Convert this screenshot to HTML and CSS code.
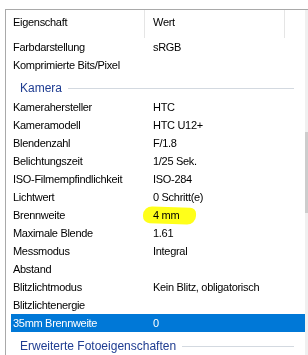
FILE: index.html
```html
<!DOCTYPE html>
<html>
<head>
<meta charset="utf-8">
<link rel="stylesheet" href="styles.css">
</head>
<body>
<div class="frame">
  <div class="list">
    <div class="header">
      <div class="hcell hname">Eigenschaft</div>
      <div class="hcell hval">Wert</div>
    </div>
    <div class="rows">
      <div class="row"><span class="name">Farbdarstellung</span><span class="val">sRGB</span></div>
      <div class="row"><span class="name">Komprimierte Bits/Pixel</span><span class="val"></span></div>
      <div class="group"><span class="gtext">Kamera</span></div>
      <div class="row"><span class="name">Kamerahersteller</span><span class="val">HTC</span></div>
      <div class="row"><span class="name">Kameramodell</span><span class="val">HTC U12+</span></div>
      <div class="row"><span class="name">Blendenzahl</span><span class="val">F/1.8</span></div>
      <div class="row"><span class="name">Belichtungszeit</span><span class="val">1/25 Sek.</span></div>
      <div class="row"><span class="name">ISO-Filmempfindlichkeit</span><span class="val">ISO-284</span></div>
      <div class="row"><span class="name">Lichtwert</span><span class="val">0 Schritt(e)</span></div>
      <div class="row"><span class="name">Brennweite</span><span class="val marked">4 mm<span class="hl"></span></span></div>
      <div class="row"><span class="name">Maximale Blende</span><span class="val">1.61</span></div>
      <div class="row"><span class="name">Messmodus</span><span class="val">Integral</span></div>
      <div class="row"><span class="name">Abstand</span><span class="val"></span></div>
      <div class="row"><span class="name">Blitzlichtmodus</span><span class="val">Kein Blitz, obligatorisch</span></div>
      <div class="row"><span class="name">Blitzlichtenergie</span><span class="val"></span></div>
      <div class="row selected"><span class="name">35mm Brennweite</span><span class="val">0</span></div>
      <div class="group"><span class="gtext">Erweiterte Fotoeigenschaften</span></div>
    </div>
  </div>
  <div class="scrollbar"><div class="thumb"></div></div>
</div>
</body>
</html>
```
FILE: styles.css
```css
html, body {
  margin: 0;
  padding: 0;
  overflow: hidden;
  background: #fff;
}
body {
  font-family: "Liberation Sans", Arial, sans-serif;
  font-size: 11px;
  letter-spacing: -0.3px;
  color: #000;
}
.frame {
  margin: 9px 0 0 5px;
  border-top: 1px solid #a9a9a9;
  border-left: 1px solid #a9a9a9;
  display: flex;
  height: 345px;
}
.list {
  flex: 1;
  padding-left: 5px;
}
.header {
  display: grid;
  grid-template-columns: 134px 140px;
  height: 28px;
}
.hcell {
  box-sizing: border-box;
  line-height: 25px;
  border-right: 1px solid #e5e5e5;
  white-space: nowrap;
}
.hname { padding-left: 2px; }
.hval { padding-left: 8px; }
.row {
  display: grid;
  grid-template-columns: 134px 142px;
  height: 18px;
  line-height: 18px;
  white-space: nowrap;
}
.name { padding-left: 2px; }
.val { padding-left: 8px; }
.marked { position: relative; }
.hl {
  position: absolute;
  left: -2px;
  top: 1px;
  width: 53px;
  height: 17px;
  border-radius: 9px 6px 9px 7px;
  background: #ffff1a;
  mix-blend-mode: multiply;
  transform: rotate(2deg);
}
.selected {
  background: #0078d7;
  color: #fff;
}
.group {
  display: flex;
  align-items: center;
  height: 20px;
  padding-top: 4px;
  padding-left: 9px;
  padding-right: 11px;
  color: #1e3c91;
  font-size: 12px;
  letter-spacing: 0;
}
.group::after {
  content: "";
  flex: 1;
  height: 1px;
  background: #d3d9e0;
  margin-left: 6px;
}
.scrollbar {
  width: 3px;
  background: #f0f0f0;
}
.thumb {
  margin-top: 122px;
  height: 81px;
  background: #cdcdcd;
}
```
